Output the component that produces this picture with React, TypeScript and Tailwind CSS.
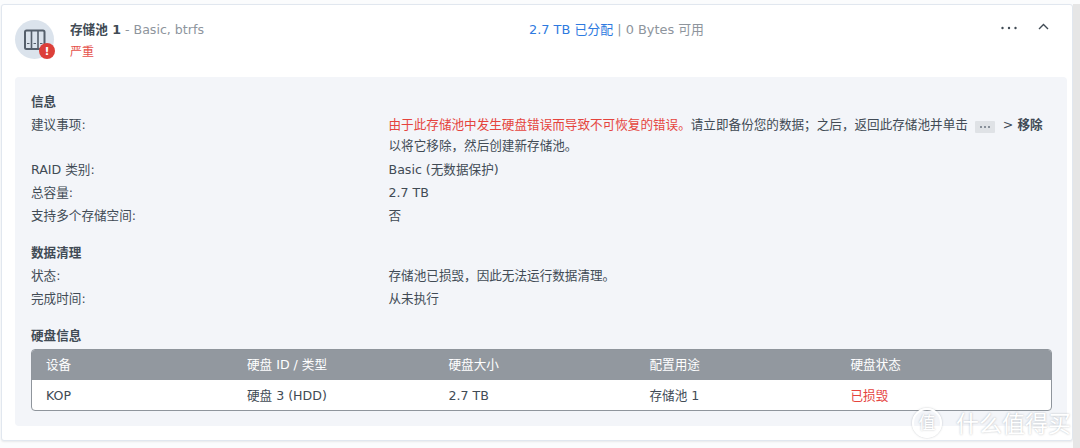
const font = { fontFamily: '"DejaVu Sans", "Noto Sans CJK SC", sans-serif' };

function Row({ label, children }: { label: string; children: React.ReactNode }) {
  return (
    <div className="flex min-h-[23px] items-start leading-[23px]">
      <div className="w-[357.5px] shrink-0">{label}</div>
      <div className="min-w-0 flex-1">{children}</div>
    </div>
  );
}

function Section({ children }: { children: React.ReactNode }) {
  return <div className="h-[23px] font-semibold leading-[23px] text-[#414b55]">{children}</div>;
}

const cols = ["w-[201px]", "w-[201.5px]", "w-[201px]", "w-[201px]", "flex-1"];

export default function App() {
  return (
    <div className="relative h-[448px] w-[1080px] overflow-hidden bg-[#fbfcfd] text-[12.6px] text-[#414b55]" style={font}>
      <div className="absolute right-0 top-[4px] h-full w-[7px] bg-[#e6e6e6]" />
      <div className="ml-[1px] mt-[4px] h-[437px] w-[1072px] rounded-[3px] border border-[#e1e7ef] bg-white shadow-[0_1px_2px_rgba(0,0,0,0.08)]">
        <div className="flex h-[72px] pl-[13px] pr-[23px]">
          <div className="relative mt-[15px] h-[39px] w-[39px] shrink-0 rounded-full bg-[#dbe3ec]">
            <svg className="absolute left-[9px] top-[9px]" width="22" height="22" viewBox="0 0 22 22" fill="none">
              <rect x="1" y="1.5" width="19.5" height="18.5" rx="1.5" stroke="#555f6b" strokeWidth="2" />
              <path d="M7.5 2v18M14 2v18" stroke="#555f6b" strokeWidth="1.6" />
              <path d="M3 14.500h2.500M9.500 14.500H12M16 14.500h2.500" stroke="#555f6b" strokeWidth="1" />
            </svg>
            <div className="absolute left-[24px] top-[23px] flex h-[16px] w-[16px] items-center justify-center rounded-full bg-[#dc3f39] text-[11px] font-bold leading-none text-white">!</div>
          </div>
          <div className="ml-[16px] w-[320px] shrink-0 pt-[13px]">
            <div className="h-[24px] leading-[24px]">
              <span className="font-semibold text-[#414b55]">存储池 1</span>
              <span className="text-[#8e959d]"> - Basic, btrfs</span>
            </div>
            <div className="text-[12px] leading-[20px] text-[#e5514b]">严重</div>
          </div>
          <div className="flex-1 pt-[13px] text-[12.9px] leading-[24px]">
            <div className="ml-[139px]">
              <span className="text-[#2e7ae0]">2.7 TB 已分配</span>
              <span className="text-[#8e959d]"> | 0 Bytes 可用</span>
            </div>
          </div>
          <div className="flex items-start gap-[20px] pt-[15px]">
            <svg width="17" height="16" viewBox="0 0 17 16" fill="#414b55">
              <circle cx="2.500" cy="8" r="1.200" />
              <circle cx="9" cy="8" r="1.200" />
              <circle cx="15.500" cy="8" r="1.200" />
            </svg>
            <svg width="12" height="16" viewBox="0 0 12 16" fill="none">
              <path d="M2 9 6.500 4.500 11 9" stroke="#414b55" strokeWidth="1.400" />
            </svg>
          </div>
        </div>
        <div className="ml-[13px] mr-[5px] h-[349px] rounded-[4px] bg-[#f3f5f9] px-[16px] pt-[13px]">
          <Section>信息</Section>
          <div className="flex h-[45px] items-start pt-[1px] leading-[21px]">
            <div className="w-[357.5px] shrink-0">建议事项:</div>
            <div className="min-w-0 flex-1 whitespace-nowrap">
              <span className="text-[#e5443d]">由于此存储池中发生硬盘错误而导致不可恢复的错误。</span>
              请立即备份您的数据；之后，返回此存储池并单击
              <span className="ml-[7px] mr-[8px] inline-flex h-[12px] w-[20px] items-center justify-center gap-[2px] rounded-[1px] bg-[#dfe2e6] align-[1px]">
                <i className="h-[2px] w-[2px] rounded-full bg-[#6b7480]" />
                <i className="h-[2px] w-[2px] rounded-full bg-[#6b7480]" />
                <i className="h-[2px] w-[2px] rounded-full bg-[#6b7480]" />
              </span>
              {"> "}
              <b className="font-semibold">移除</b>
              <br />
              以将它移除，然后创建新存储池。
            </div>
          </div>
          <Row label="RAID 类别:">Basic (无数据保护)</Row>
          <Row label="总容量:">2.7 TB</Row>
          <Row label="支持多个存储空间:">否</Row>
          <div className="h-[14px]" />
          <Section>数据清理</Section>
          <Row label="状态:">存储池已损毁，因此无法运行数据清理。</Row>
          <Row label="完成时间:">从未执行</Row>
          <div className="h-[14px]" />
          <Section>硬盘信息</Section>
          <div className="mt-[2px] h-[62px] w-[1021px] overflow-hidden rounded-[4px] border border-[#8f959c] bg-white">
            <div className="flex h-[30px] items-center bg-[#92989f] pl-[14px] text-white">
              {["设备", "硬盘 ID / 类型", "硬盘大小", "配置用途", "硬盘状态"].map((t, i) => (
                <div key={t} className={cols[i]}>{t}</div>
              ))}
            </div>
            <div className="flex h-[30px] items-center pl-[14px] pt-[2px]">
              {["KOP", "硬盘 3 (HDD)", "2.7 TB", "存储池 1"].map((t, i) => (
                <div key={t} className={cols[i]}>{t}</div>
              ))}
              <div className={`${cols[4]} text-[#e5443d]`}>已损毁</div>
            </div>
          </div>
        </div>
      </div>
      <div className="absolute left-[912px] top-[408px] flex items-center gap-[14px] text-white [text-shadow:0_0_2px_rgba(70,80,90,0.4)]">
        <div className="flex h-[30px] w-[30px] items-center justify-center rounded-full border-2 border-white text-[17px] leading-none shadow-[0_0_2px_rgba(70,80,90,0.35)]">值</div>
        <div className="mt-[2px] text-[23px] leading-[28px]">什么值得买</div>
      </div>
    </div>
  );
}
